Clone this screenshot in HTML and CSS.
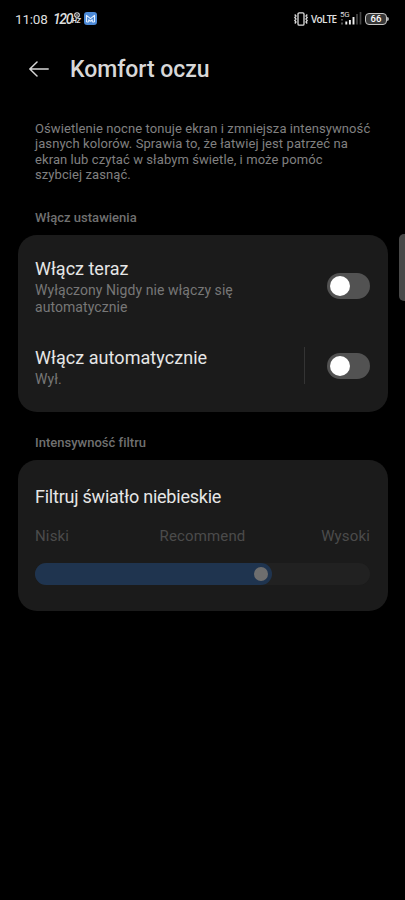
FILE: index.html
```html
<!DOCTYPE html>
<html lang="pl">
<head>
<meta charset="utf-8">
<title>Komfort oczu</title>
<link rel="stylesheet" href="styles.css">
</head>
<body>
<div class="screen">
  <div class="status">
    <span class="clock">11:08</span>
    <span class="rate">120</span>
    <span class="rate-unit"><svg class="rate-ring" viewBox="0 0 6 6"><circle cx="3" cy="3" r="2.300" fill="none" stroke="#ddd" stroke-width="1.100"/><path d="M3 2v2" stroke="#ddd"/></svg><span class="hz">HZ</span></span>
    <svg class="app" viewBox="0 0 13 13"><rect width="13" height="13" rx="3" fill="#4c8ad8"/><path d="M2.500 10V3.400L6.500 6.700l4-3.300V10M4.700 10V7.800L6.500 9.200l1.800-1.400V10M2.500 10h2.200M8.300 10h2.200" fill="none" stroke="#e3efff" stroke-width="1.100" stroke-linejoin="round"/></svg>
    <span class="grow"></span>
    <svg class="vibrate" viewBox="0 0 14 14" fill="none" stroke="#ddd" stroke-width="1.300"><rect x="4" y=".8" width="6" height="12.400" rx="1.200"/><path d="M.7 2.500 2 4 .8 5.500 2 7 .8 8.500 2 10 .8 11.500M13.300 2.500 12 4l1.200 1.500L12 7l1.200 1.500L12 10l1.200 1.500"/></svg>
    <span class="volte">VoLTE</span>
    <div class="signal">
      <span class="gen">5G</span>
      <svg viewBox="0 0 22 14"><path d="M2 8v1.500M2 11.500v2" stroke="#aaa" stroke-width="1"/><path d="M6.300 10.500V13.500M9.900 9V13.500M13.500 6V13.500" stroke="#eee" stroke-width="1.900"/><path d="M17 3V13.500M20.500 1V13.500" stroke="#454545" stroke-width="1.700"/></svg>
    </div>
    <div class="battery"><span>66</span></div>
    <i class="cap"></i>
  </div>
  <header class="header">
    <svg class="back" viewBox="0 0 20 16" fill="none" stroke="#d6d6d6" stroke-width="1.500" stroke-linecap="round" stroke-linejoin="round"><path d="M19.200 8H.8M8 1 .8 8 8 15"/></svg>
    <h1>Komfort oczu</h1>
  </header>
  <p class="intro">Oświetlenie nocne tonuje ekran i zmniejsza intensywność<br>jasnych kolorów. Sprawia to, że łatwiej jest patrzeć na<br>ekran lub czytać w słabym świetle, i może pomóc<br>szybciej zasnąć.</p>
  <h2 class="first">Włącz ustawienia</h2>
  <section class="card settings">
    <div class="row">
      <div class="label"><h3 class="now">Włącz teraz</h3><p>Wyłączony Nigdy nie włączy się<br>automatycznie</p></div>
      <span class="toggle"><i></i></span>
    </div>
    <div class="row">
      <div class="label"><h3 class="auto">Włącz automatycznie</h3><p>Wył.</p></div>
      <i class="divider"></i>
      <span class="toggle"><i></i></span>
    </div>
  </section>
  <h2 class="second">Intensywność filtru</h2>
  <section class="card filter">
    <h3>Filtruj światło niebieskie</h3>
    <div class="levels"><span>Niski</span><span>Recommend</span><span>Wysoki</span></div>
    <div class="slider"><div class="fill"><i></i></div></div>
  </section>
  <i class="edge"></i>
</div>
</body>
</html>
```
FILE: styles.css
```css
* { box-sizing: border-box; margin: 0; padding: 0; }
body { background: #000; font-family: Roboto, sans-serif; color: #e6e6e6; }
.screen { position: relative; width: 405px; height: 900px; overflow: hidden; background: #000; }
.status { display: flex; align-items: center; height: 37px; padding: 0 16px 0 15px; }
.clock { width: 38px; font-size: 13.500px; letter-spacing: -.2px; color: #ddd; }
.rate { width: 19px; font: italic 500 14px/16px Roboto, sans-serif; letter-spacing: -1.4px; color: #ddd; }
.rate-unit { display: flex; flex-direction: column; width: 12px; height: 13px; }
.rate-ring { width: 6px; height: 6px; margin-left: 2px; }
.hz { font: italic 700 7px/7px Roboto, sans-serif; letter-spacing: -.4px; color: #ddd; }
.app { width: 13px; height: 13px; }
.grow { flex: 1; }
.vibrate { width: 14px; height: 14px; margin-right: 3px; }
.volte { width: 29px; font: 600 10px/14px "Open Sans", sans-serif; letter-spacing: -.7px; color: #e0e0e0; white-space: nowrap; }
.signal { position: relative; width: 22px; height: 14px; margin-right: 3px; }
.signal svg { display: block; width: 22px; height: 14px; margin-top: -1px; }
.gen { position: absolute; left: 0; top: -1px; font: 400 8px/8px Roboto, sans-serif; letter-spacing: -.3px; color: #ddd; }
.battery { display: flex; align-items: center; justify-content: center; width: 22px; height: 12px; border: 1px solid #c5c5c5; border-radius: 4px; background: #383838; }
.battery span { font: 500 9.500px/10px Roboto, sans-serif; color: #fff; }
.cap { width: 2px; height: 4px; background: #aaa; border-radius: 0 2px 2px 0; }
.header { display: flex; align-items: center; height: 64px; padding-left: 29px; }
.back { width: 20px; height: 16px; margin-right: 21px; }
h1 { margin-top: 1px; font-size: 23px; line-height: 28px; font-weight: 500; letter-spacing: -.03px; color: #d8d8d8; }
.intro { margin: 20px 0 0 35px; font-size: 13px; line-height: 15.330px; letter-spacing: .085px; color: #808080; white-space: nowrap; }
h2 { margin-left: 35px; font-size: 13px; line-height: 16px; font-weight: 500; letter-spacing: .01px; color: #707070; }
.first { margin-top: 28px; }
.second { margin-top: 23px; }
.card { width: 370px; margin-left: 17.500px; background: #1b1b1b; border-radius: 19px; }
.settings { height: 176.500px; margin-top: 9px; padding: 7px 17.500px; }
.filter { height: 151px; margin-top: 9.500px; padding: 26px 17.500px 0; }
.row { display: flex; align-items: center; height: 88px; }
.row + .row { height: 72px; }
.label { flex: 1; }
h3 { font-size: 18px; line-height: 22px; font-weight: 400; color: #e6e6e6; white-space: nowrap; }
.label .auto { letter-spacing: .05px; }
.label p { margin: 2px 0 -1px; font-size: 14px; line-height: 16.400px; letter-spacing: .06px; color: #777; }
.filter h3 { letter-spacing: -.23px; }
.toggle { display: flex; align-items: center; width: 43px; height: 26px; padding-left: 3px; border-radius: 13px; background: #525252; }
.toggle i { width: 20px; height: 20px; border-radius: 50%; background: #fff; }
.divider { width: 1px; height: 37px; margin: -2px 22px 0 0; background: #343434; }
.levels { display: grid; grid-template-columns: 1fr auto 1fr; margin-top: 19px; font-size: 15px; line-height: 18px; letter-spacing: .15px; color: #4b4b4b; }
.levels span:last-child { text-align: right; }
.slider { height: 22px; margin-top: 18px; background: #212121; border-radius: 11px; }
.fill { display: flex; align-items: center; justify-content: flex-end; width: 237px; height: 22px; padding-right: 4px; background: #1f344f; border-radius: 11px; }
.fill i { width: 14px; height: 14px; border-radius: 50%; background: #6e6e6e; }
.edge { position: absolute; left: 399px; top: 234px; width: 10px; height: 67px; border-radius: 6px; background: #484848; }
```
